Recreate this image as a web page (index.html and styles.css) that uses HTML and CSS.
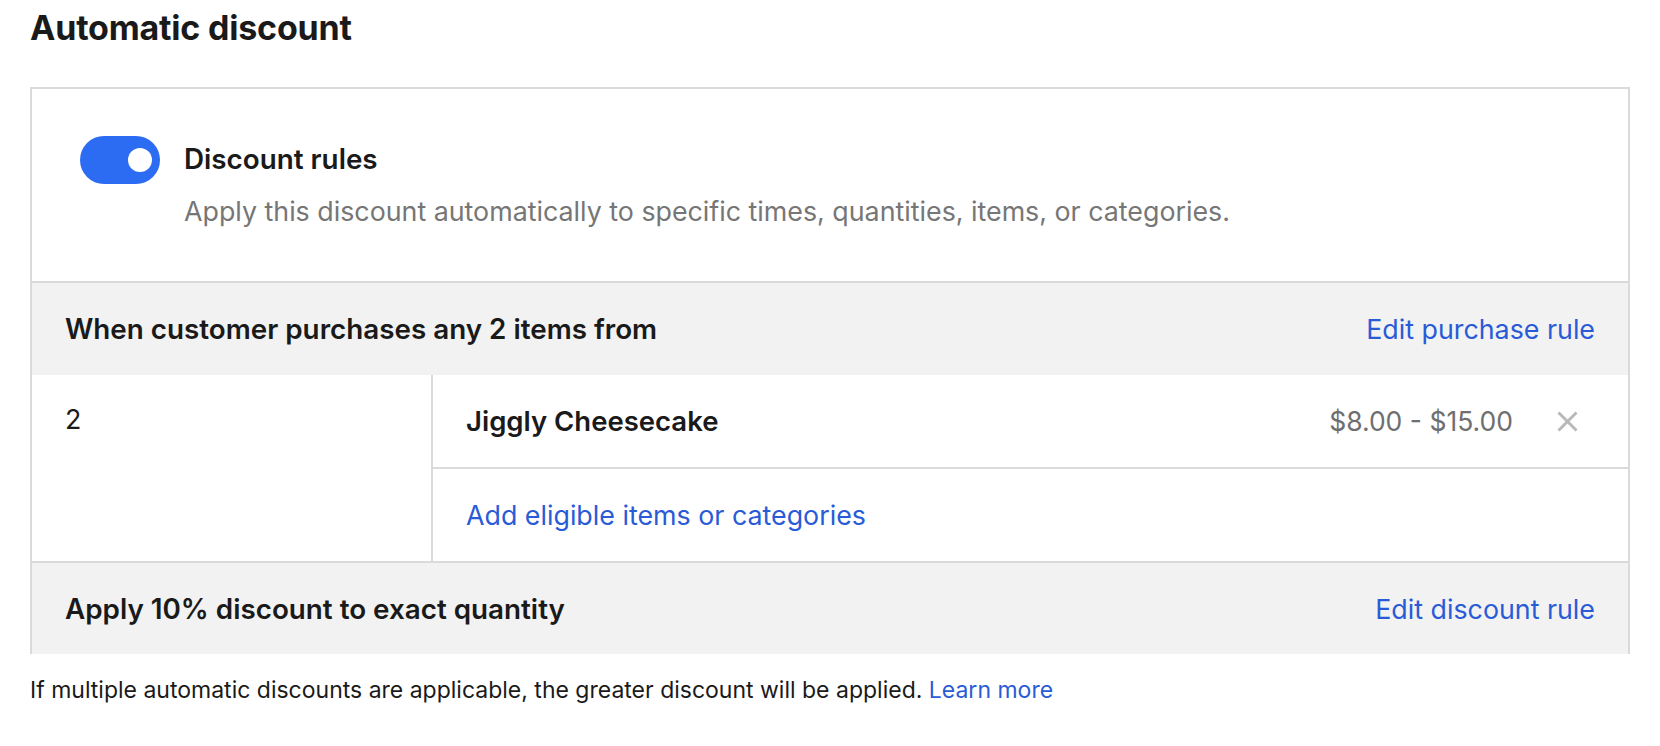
FILE: index.html
```html
<!DOCTYPE html>
<html lang="en">
<head>
    <meta charset="UTF-8">
    <meta name="viewport" content="width=device-width, initial-scale=1.0">
    <title>Automatic discount</title>
    <link rel="stylesheet" href="styles.css">
</head>
<body>
    <div class="page">
        <h1>Automatic discount</h1>

        <div class="card">
            <!-- Toggle section -->
            <div class="rules-head">
                <span class="toggle"><span class="knob"></span></span>
                <div class="rules-text">
                    <div class="rules-title">Discount rules</div>
                    <div class="rules-desc">Apply this discount automatically to specific times, quantities, items, or categories.</div>
                </div>
            </div>

            <div class="band">
                <span class="band-title">When customer purchases any 2 items from</span>
                <a href="#" class="link">Edit purchase rule</a>
            </div>

            <div class="items">
                <div class="qty">2</div>
                <div class="item-list">
                    <div class="item-row">
                        <span class="item-name">Jiggly Cheesecake</span>
                        <span class="item-price">$8.00 - $15.00</span>
                        <span class="remove">
                            <svg width="21" height="21" viewBox="0 0 21 21">
                                <path d="M1.5 1.5 L19.5 19.5 M19.5 1.5 L1.5 19.5" stroke="#b9b9b9" stroke-width="3" fill="none"/>
                            </svg>
                        </span>
                    </div>
                    <div class="item-row add-row">
                        <a href="#" class="link">Add eligible items or categories</a>
                    </div>
                </div>
            </div>

            <div class="band last">
                <span class="band-title">Apply 10% discount to exact quantity</span>
                <a href="#" class="link">Edit discount rule</a>
            </div>
        </div>

        <p class="note">If multiple automatic discounts are applicable, the greater discount will be applied. <a href="#" class="link">Learn more</a></p>
    </div>
</body>
</html>
```

FILE: styles.css
```css
body {
    font-family: 'Inter', 'Liberation Sans', sans-serif;
    color: #1a1a1a;
    background-color: #fff;
    margin: 0;
    padding: 0;
}

.page {
    padding: 0 30px;
}

h1 {
    font-size: 34px;
    font-weight: 700;
    letter-spacing: -0.2px;
    margin: 0;
    padding-top: 8px;
    height: 79px;
    line-height: 40px;
}

.card {
    border: 2px solid #dadada;
    border-bottom: none;
}

.rules-head {
    display: flex;
    align-items: flex-start;
    gap: 24px;
    padding: 47px 48px 0;
    height: 145px;
    border-bottom: 2px solid #dadada;
}

.toggle {
    display: flex;
    align-items: center;
    justify-content: flex-end;
    width: 80px;
    height: 48px;
    padding: 0 8px;
    box-sizing: border-box;
    border-radius: 24px;
    background-color: #2c6cf2;
    flex-shrink: 0;
}

.knob {
    width: 24px;
    height: 24px;
    border-radius: 50%;
    background-color: #fff;
}

.rules-title {
    font-size: 27.8px;
    font-weight: 600;
    line-height: 46px;
}

.rules-desc {
    font-size: 26.8px;
    line-height: 36px;
    color: #767676;
    margin-top: 11px;
}

.band {
    display: flex;
    justify-content: space-between;
    align-items: center;
    height: 92px;
    padding: 0 33px;
    background-color: #f2f2f2;
}

.band.last {
    height: 91px;
    border-top: 2px solid #dadada;
}

.band-title {
    font-size: 27.8px;
    font-weight: 600;
}

.link {
    color: #2a5bd7;
    text-decoration: none;
    font-size: 26.8px;
}

.items {
    display: flex;
}

.qty {
    width: 401px;
    padding: 28px 33px 0;
    box-sizing: border-box;
    font-size: 26.8px;
    border-right: 2px solid #dadada;
}

.item-list {
    flex: 1;
}

.item-row {
    display: flex;
    align-items: center;
    height: 92px;
    padding: 0 33px;
}

.item-row:first-child {
    border-bottom: 2px solid #dadada;
}

.item-name {
    font-size: 27.5px;
    font-weight: 600;
    flex: 1;
}

.item-price {
    font-size: 26.5px;
    color: #6f6f6f;
}

.remove {
    display: flex;
    margin-left: 44px;
    margin-right: 17px;
}

.note {
    font-size: 23px;
    line-height: 28px;
    margin: 22px 0 0;
}

.note .link {
    font-size: 23px;
}
```
